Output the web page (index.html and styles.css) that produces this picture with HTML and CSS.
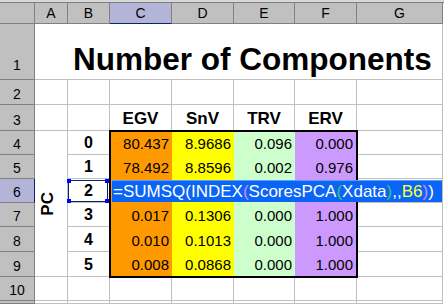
FILE: index.html
```html
<!DOCTYPE html>
<html lang="en">
  <head>
    <meta charset="UTF-8" />
    <title>Number of Components</title>
    <link rel="stylesheet" href="styles.css">
  </head>
  <body>
    <div class="topbar"></div>
    <div class="sheet">
      <div class="hd corner"></div>
      <div class="hd col">A</div>
      <div class="hd col">B</div>
      <div class="hd col sel-col">C</div>
      <div class="hd col">D</div>
      <div class="hd col">E</div>
      <div class="hd col">F</div>
      <div class="hd col">G</div>

      <div class="hd row row-tall">1</div>
      <div class="cell title">Number of Components</div>

      <div class="hd row">2</div>
      <div class="cell"></div><div class="cell"></div><div class="cell"></div><div class="cell"></div>
      <div class="cell"></div><div class="cell"></div><div class="cell"></div>

      <div class="hd row">3</div>
      <div class="cell"></div>
      <div class="cell"></div>
      <div class="cell label">EGV</div>
      <div class="cell label">SnV</div>
      <div class="cell label">TRV</div>
      <div class="cell label">ERV</div>
      <div class="cell"></div>

      <div class="cell pc"><span>PC</span></div>

      <div class="data">
        <div class="col-egv">80.437</div><div class="col-snv">8.9686</div><div class="col-trv">0.096</div><div class="col-erv">0.000</div>
        <div class="col-egv">78.492</div><div class="col-snv">8.8596</div><div class="col-trv">0.002</div><div class="col-erv">0.976</div>
        <div class="col-egv"></div><div class="col-snv"></div><div class="col-trv"></div><div class="col-erv"></div>
        <div class="col-egv">0.017</div><div class="col-snv">0.1306</div><div class="col-trv">0.000</div><div class="col-erv">1.000</div>
        <div class="col-egv">0.010</div><div class="col-snv">0.1013</div><div class="col-trv">0.000</div><div class="col-erv">1.000</div>
        <div class="col-egv">0.008</div><div class="col-snv">0.0868</div><div class="col-trv">0.000</div><div class="col-erv">1.000</div>
      </div>

      <div class="hd row">4</div>
      <div class="cell pcnum">0</div>
      <div class="cell"></div>

      <div class="hd row">5</div>
      <div class="cell pcnum">1</div>
      <div class="cell"></div>

      <div class="hd row sel-row">6</div>
      <div class="cell pcnum active">
        2
        <span class="range">
          <i class="grip tl"></i><i class="grip tr"></i><i class="grip bl"></i><i class="grip br"></i>
        </span>
      </div>
      <div class="cell"></div>

      <div class="hd row">7</div>
      <div class="cell pcnum">3</div>
      <div class="cell"></div>

      <div class="hd row">8</div>
      <div class="cell pcnum">4</div>
      <div class="cell"></div>

      <div class="hd row">9</div>
      <div class="cell pcnum">5</div>
      <div class="cell"></div>

      <div class="hd row">10</div>
      <div class="cell"></div><div class="cell"></div><div class="cell"></div><div class="cell"></div>
      <div class="cell"></div><div class="cell"></div><div class="cell"></div>

      <div class="hd row"></div>
      <div class="cell"></div><div class="cell"></div><div class="cell"></div><div class="cell"></div>
      <div class="cell"></div><div class="cell"></div><div class="cell"></div>

      <div class="editor">=SUMSQ(INDEX<span class="p2">(</span>ScoresPCA<span class="p3">(</span>Xdata<span class="p3">)</span>,,<span class="ref">B6</span><span class="p2">)</span>)</div>
    </div>
  </body>
</html>
```

FILE: styles.css
```css
* {
  margin: 0;
  padding: 0;
  box-sizing: border-box;
}
body {
  font-family: "Liberation Sans", Arial, sans-serif;
  background: #fff;
  color: #000;
  width: 444px;
  height: 304px;
  overflow: hidden;
}
.topbar {
  height: 3px;
  background: #d8d8d8;
  border-bottom: 1px solid #808080;
}
.sheet {
  position: relative;
  display: grid;
  grid-template-columns: 35px 33px 42px 62px 62px 61px 62px 86px;
  grid-template-rows: 21px 56px 25px 26px 24px 24px 24px 24px 25px 25px 24px 3px;
}
.hd {
  background: #c0c0c0;
  border-right: 1px solid #808080;
  border-bottom: 1px solid #808080;
  font-size: 14px;
  line-height: 16px;
  display: flex;
  justify-content: center;
  align-items: center;
}
.row {
  align-items: flex-end;
  padding-bottom: 2px;
}
.row-tall {
  padding-bottom: 6px;
}
.sel-col {
  background: #b4b4d9;
  border-bottom-color: #0a246a;
}
.sel-row {
  background: #b4b4d9;
  border-right-color: #0a246a;
}
.cell {
  border-right: 1px solid #c0c0c0;
  border-bottom: 1px solid #c0c0c0;
}
.title {
  grid-column: 2 / 9;
  font-size: 31.5px;
  font-weight: bold;
  line-height: 36px;
  padding-left: 38px;
  padding-bottom: 2px;
  display: flex;
  align-items: flex-end;
}
.label {
  font-size: 17px;
  font-weight: bold;
  line-height: 19px;
  display: flex;
  justify-content: center;
  align-items: flex-end;
  padding-bottom: 2px;
}
.pcnum {
  font-size: 16px;
  font-weight: bold;
  line-height: 18px;
  display: flex;
  justify-content: center;
  align-items: flex-end;
  padding-bottom: 2px;
}
.pc {
  grid-column: 2;
  grid-row: 5 / 11;
  display: flex;
  justify-content: center;
  align-items: center;
  padding-right: 7px;
}
.pc span {
  writing-mode: vertical-rl;
  transform: rotate(180deg);
  font-size: 17px;
  font-weight: bold;
  line-height: 17px;
}
.data {
  grid-column: 4 / 8;
  grid-row: 5 / 11;
  margin: -1px -1px -1px -1px;
  border: 2px solid #000;
  display: grid;
  grid-template-columns: 61px 62px 61px 61px;
  grid-template-rows: 23px 24px 24px 24px 25px 24px;
  font-size: 15px;
  line-height: 17px;
  position: relative;
  z-index: 1;
}
.data div {
  display: flex;
  justify-content: flex-end;
  align-items: flex-end;
  padding: 0 3px 3px 0;
}
.col-egv {
  background: #ff9900;
}
.col-snv {
  background: #ffff00;
}
.col-trv {
  background: #ccffcc;
}
.col-erv {
  background: #cc99ff;
}
.active {
  position: relative;
}
.range {
  position: absolute;
  left: 0;
  top: 1px;
  right: 1px;
  bottom: 0;
  border: 1px solid #0a246a;
}
.grip {
  position: absolute;
  width: 4px;
  height: 4px;
  background: #0000ff;
}
.tl {
  left: -2px;
  top: -2px;
}
.tr {
  right: -2px;
  top: -2px;
}
.bl {
  left: -2px;
  bottom: -2px;
}
.br {
  right: -2px;
  bottom: -2px;
}
.editor {
  position: absolute;
  left: 112px;
  top: 177px;
  width: 330px;
  height: 22px;
  background: #0a64f5;
  border-top: 1px solid #5f9bff;
  color: #fff;
  font-size: 17px;
  line-height: 21px;
  padding-left: 1px;
  white-space: nowrap;
  z-index: 2;
}
.p2 {
  color: #e080ff;
}
.p3 {
  color: #33cc66;
}
.ref {
  color: #ffff33;
}
```
